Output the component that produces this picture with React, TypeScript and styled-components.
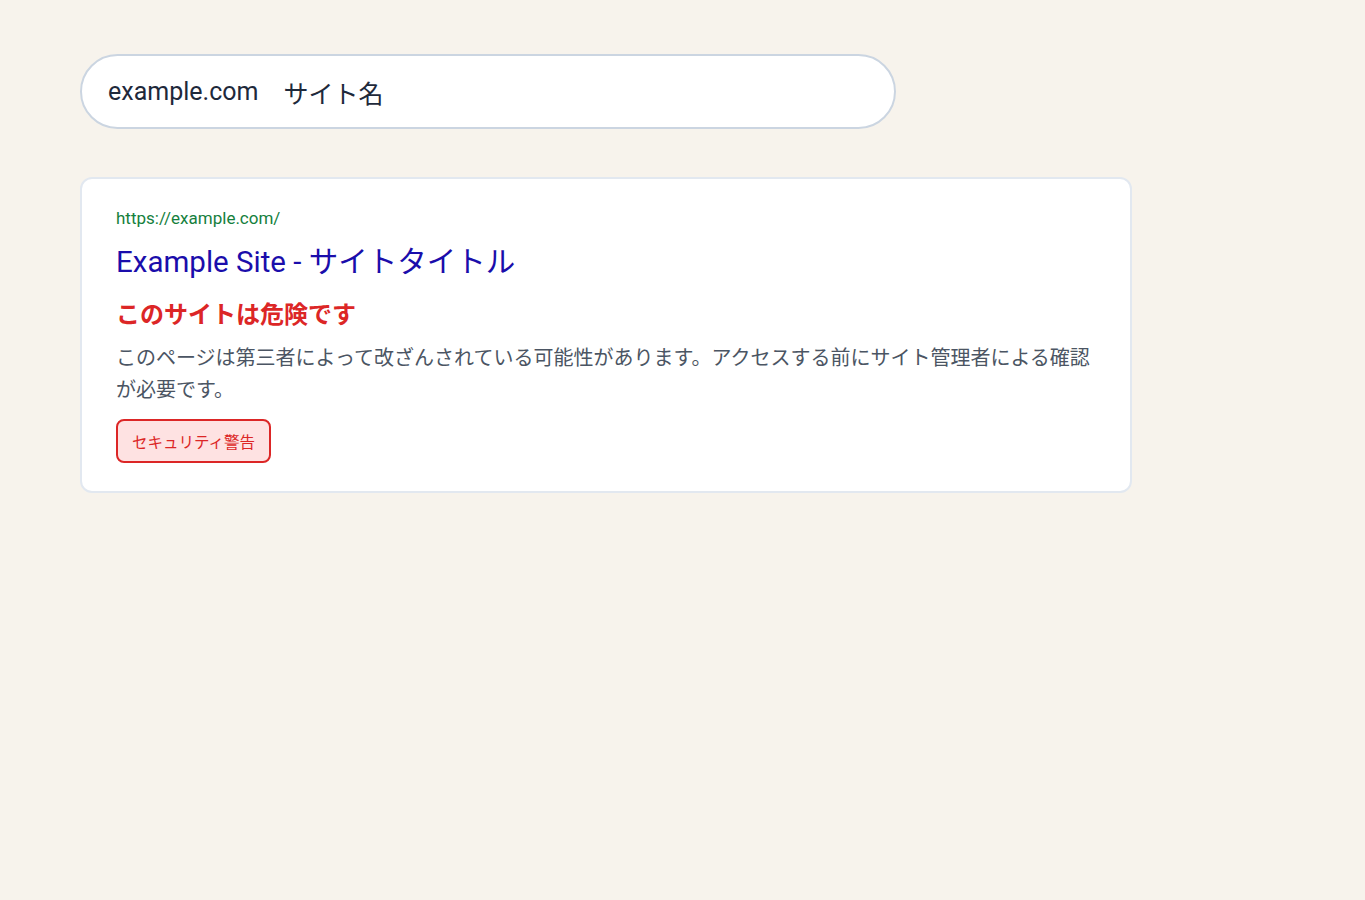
import React from "react";
import styled, { createGlobalStyle } from "styled-components";

const GlobalStyle = createGlobalStyle`
  html, body {
    margin: 0;
    padding: 0;
    background: #f7f3ec;
  }
  body {
    font-family: Roboto, "Noto Sans CJK JP", sans-serif;
    color: #1f2937;
  }
`;

const Page = styled.main`
  display: flex;
  flex-direction: column;
  align-items: flex-start;
  gap: 48px;
  padding: 54px 80px;
`;

const SearchBox = styled.div`
  box-sizing: border-box;
  width: 816px;
  height: 75px;
  display: flex;
  align-items: center;
  gap: 25px;
  padding: 0 26px;
  background: #ffffff;
  border: 2px solid #cbd5e1;
  border-radius: 38px;
  font-size: 25px;
  color: #1e293b;
`;

const Card = styled.article`
  box-sizing: border-box;
  width: 1052px;
  display: flex;
  flex-direction: column;
  align-items: flex-start;
  padding: 27px 32px 28px 34px;
  background: #ffffff;
  border: 2px solid #e2e8f0;
  border-radius: 12px;
`;

const Url = styled.div`
  font-size: 17px;
  line-height: 24px;
  color: #15803d;
`;

const Title = styled.a`
  display: block;
  margin-top: 12px;
  font-size: 29.5px;
  line-height: 40px;
  color: #1a0dab;
  text-decoration: none;
`;

const Warning = styled.h3`
  margin: 17px 0 0;
  font-size: 24px;
  line-height: 32px;
  font-weight: 700;
  color: #dc2626;
`;

const Description = styled.p`
  margin: 11px 0 0;
  font-size: 20px;
  line-height: 32px;
  color: #4b5563;
`;

const Badge = styled.span<{ $tone?: "danger" }>`
  display: inline-flex;
  align-items: center;
  box-sizing: border-box;
  height: 44px;
  margin-top: 13px;
  padding: 0 14px;
  font-size: 15.5px;
  color: #dc2626;
  background: #fee2e2;
  border: 2px solid #dc2626;
  border-radius: 8px;
`;

export default function App() {
  return (
    <>
      <GlobalStyle />
      <Page>
        <SearchBox>
          <span>example.com</span>
          <span>サイト名</span>
        </SearchBox>
        <Card>
          <Url>https://example.com/</Url>
          <Title href="#">Example Site - サイトタイトル</Title>
          <Warning>このサイトは危険です</Warning>
          <Description>
            このページは第三者によって改ざんされている可能性があります。アクセスする前にサイト管理者による確認が必要です。
          </Description>
          <Badge $tone="danger">セキュリティ警告</Badge>
        </Card>
      </Page>
    </>
  );
}
